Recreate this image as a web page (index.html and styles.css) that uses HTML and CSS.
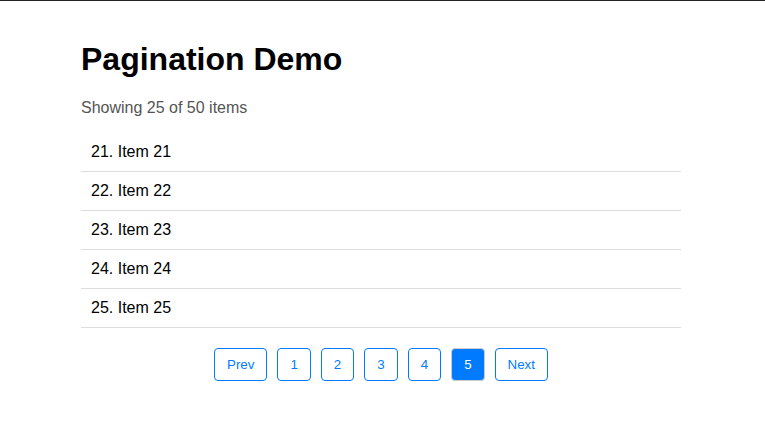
FILE: index.html
```html
<!DOCTYPE html>
<html lang="en">
<head>
<meta charset="utf-8">
<title>Pagination Demo</title>
<link rel="stylesheet" href="styles.css">
</head>
<body>
<div class="container">
  <h1 class="title">Pagination Demo</h1>
  <p class="summary">Showing 25 of 50 items</p>
  <ul class="items">
    <li class="item">21. Item 21</li>
    <li class="item">22. Item 22</li>
    <li class="item">23. Item 23</li>
    <li class="item">24. Item 24</li>
    <li class="item">25. Item 25</li>
  </ul>
  <div class="pager">
    <button class="page-btn">Prev</button>
    <button class="page-btn">1</button>
    <button class="page-btn">2</button>
    <button class="page-btn">3</button>
    <button class="page-btn">4</button>
    <button class="page-btn active">5</button>
    <button class="page-btn">Next</button>
  </div>
</div>
</body>
</html>
```

FILE: styles.css
```css
html {
  border-top: 1px solid #222;
}
body {
  margin: 0;
  padding-right: 3px;
  font-family: "Liberation Sans", Arial, sans-serif;
  color: #000;
  background: #fff;
}
.container {
  max-width: 600px;
  margin: 40px auto 0;
}
.title {
  font-size: 32px;
  font-weight: bold;
  margin: 0 0 21.44px;
}
.summary {
  font-size: 16px;
  color: #555;
  margin: 0 0 16px;
}
.items {
  list-style: none;
  margin: 0;
  padding: 0;
}
.item {
  font-size: 16px;
  padding: 10px;
  border-bottom: 1px solid #ddd;
}
.pager {
  display: flex;
  justify-content: center;
  gap: 10px;
  margin-top: 20px;
}
.page-btn {
  font-family: "Liberation Sans", Arial, sans-serif;
  font-size: 13.333px;
  padding: 8px 12px;
  border: 1px solid #007bff;
  border-radius: 4px;
  background: #fff;
  color: #007bff;
}
.page-btn.active {
  background: #007bff;
  color: #fff;
  border-color: #ccc;
}
```
